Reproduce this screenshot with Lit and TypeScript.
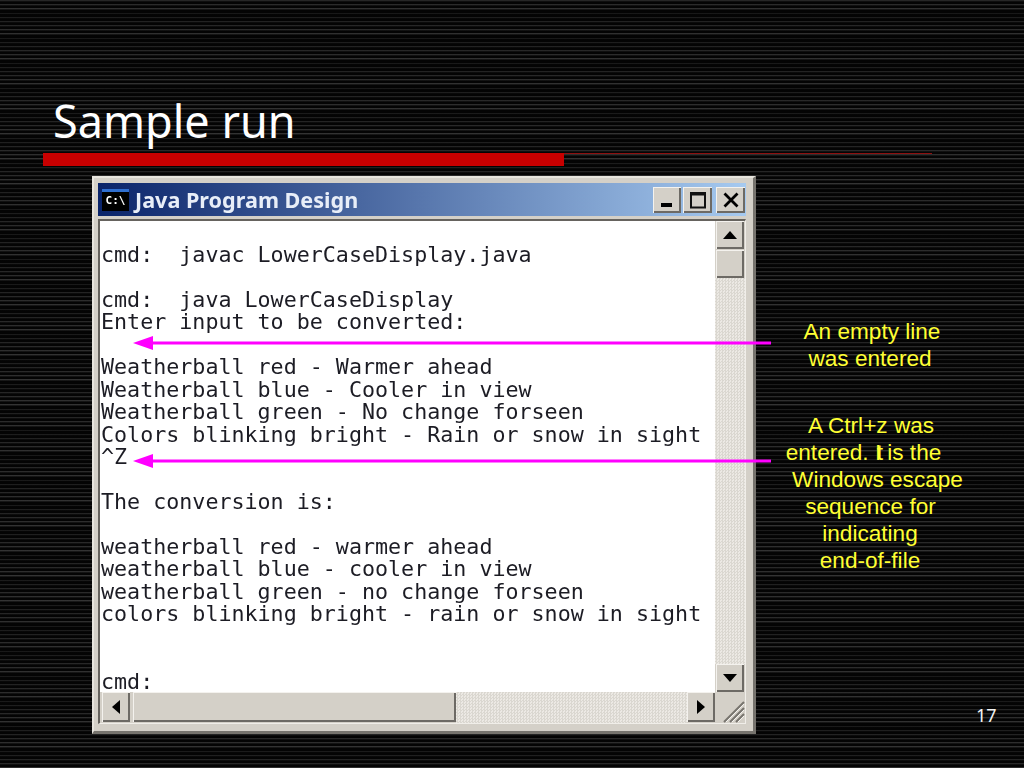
import { LitElement, html, css, svg } from "lit";
import { customElement } from "lit/decorators.js";

const CONSOLE = `cmd:  javac LowerCaseDisplay.java

cmd:  java LowerCaseDisplay
Enter input to be converted:

Weatherball red - Warmer ahead
Weatherball blue - Cooler in view
Weatherball green - No change forseen
Colors blinking bright - Rain or snow in sight
^Z

The conversion is:

weatherball red - warmer ahead
weatherball blue - cooler in view
weatherball green - no change forseen
colors blinking bright - rain or snow in sight


cmd:`;

const arrow = (y: number) => svg`
  <polygon points="133,${y} 153,${y - 7} 153,${y + 7}" fill="#ff00ff" />
  <rect x="150" y="${y - 1.5}" width="621" height="3" fill="#ff00ff" />`;

@customElement("app-root")
export class AppRoot extends LitElement {
  static styles = css`
    :host {
      display: block;
      position: relative;
      width: 1024px;
      height: 768px;
      overflow: hidden;
      background-color: #040404;
      background-image: repeating-linear-gradient(
        to bottom,
        #343434 0px,
        #181818 1px,
        #040404 2px,
        #040404 4.17px
      );
      font-family: "Liberation Sans", Arial, sans-serif;
    }
    .title {
      margin: 0;
      padding: 89px 0 0 53px;
      box-sizing: border-box;
      font: 400 45px/64px "Noto Sans", sans-serif;
      color: #fff;
      height: 153px;
    }
    .rule {
      display: flex;
      align-items: flex-start;
      margin-left: 43px;
    }
    .rule-bar {
      width: 521px;
      height: 13px;
      background: #c80000;
    }
    .rule-line {
      width: 368px;
      height: 1px;
      background: #8c1010;
    }
    .content {
      display: flex;
      margin: 10px 0 0 92px;
    }
    .window {
      flex: none;
      box-sizing: border-box;
      width: 664px;
      height: 558px;
      padding: 6px 7px 7px 4px;
      background: #d4d0c8;
      border-top: 2px solid #e8e5de;
      border-left: 2px solid #e8e5de;
      border-right: 3px solid #77746e;
      border-bottom: 3px solid #77746e;
      display: flex;
      flex-direction: column;
      filter: blur(0.45px);
    }
    .titlebar {
      flex: none;
      height: 33px;
      margin: -1px 0 0 0;
      background: linear-gradient(to right, #0a246a, #a6caf0);
      display: flex;
      align-items: center;
      padding: 0 1px 0 4px;
    }
    .appicon {
      flex: none;
      width: 27px;
      height: 22px;
      box-sizing: border-box;
      background: #000;
      border-top: 3px solid #2f6fd0;
      color: #fff;
      font: 700 11px/18px "DejaVu Sans Mono", monospace;
      text-align: center;
    }
    .apptitle {
      flex: 1;
      margin-left: 6px;
      font: 700 21.6px/30px "Noto Sans", sans-serif;
      color: #e8eef8;
      white-space: nowrap;
    }
    .capbtn {
      flex: none;
      width: 28px;
      height: 26px;
      box-sizing: border-box;
      background: #d4d0c8;
      box-shadow: inset 1px 1px 0 #f4f2ee, inset -2px -2px 0 #6d6a65;
      display: flex;
      align-items: center;
      justify-content: center;
    }
    .capbtn.max {
      width: 29px;
      margin-left: 2px;
    }
    .capbtn.close {
      width: 29px;
      margin-left: 4px;
    }
    .client {
      flex: 1;
      min-height: 0;
      margin-top: 3px;
      border-top: 2px solid #66635e;
      border-left: 2px solid #66635e;
      border-right: 1px solid #f0eee9;
      border-bottom: 1px solid #f0eee9;
      display: grid;
      grid-template-columns: minmax(0, 1fr) 30px;
      grid-template-rows: minmax(0, 1fr) 31px;
    }
    .term {
      margin: 0;
      min-height: 0;
      padding: 23px 0 0 1px;
      background: #fff;
      color: #1c1c24;
      font: 400 21.68px/22.45px "DejaVu Sans Mono", monospace;
      white-space: pre;
    }
    .vbar {
      display: flex;
      flex-direction: column;
      min-height: 0;
    }
    .hbar {
      display: flex;
      padding-left: 2px;
      background: #d4d0c8;
    }
    .sbtn {
      flex: none;
      width: 28px;
      height: 28px;
      box-sizing: border-box;
      background: #d4d0c8;
      box-shadow: inset 1px 1px 0 #f4f2ee, inset -2px -2px 0 #6d6a65;
      display: flex;
      align-items: center;
      justify-content: center;
    }
    .track {
      flex: 1;
      background-color: #ece9e4;
      background-image: repeating-conic-gradient(
        #dad7d0 0% 25%,
        #ece9e4 0% 50%
      );
      background-size: 3px 3px;
    }
    .vthumb {
      flex: none;
      height: 28px;
      margin-top: 1px;
    }
    .hthumb {
      flex: none;
      width: 323px;
      height: 30px;
      margin-left: 3px;
    }
    .vbar .sbtn {
      margin-left: 1px;
    }
    .hbar .sbtn {
      height: 30px;
    }
    .corner {
      background: #d4d0c8;
      display: flex;
      align-items: flex-end;
      justify-content: flex-end;
    }
    .notes {
      position: relative;
      flex: 1;
      color: #ffff33;
      font-size: 22.6px;
      line-height: 27px;
      text-align: center;
      white-space: nowrap;
    }
    .note {
      width: 228px;
      display: flex;
      flex-direction: column;
      align-items: center;
    }
    .note.first {
      margin-top: 142px;
    }
    .note.second {
      margin-top: 40px;
    }
    .l1 {
      margin-left: 4px;
    }
    .l2 {
      margin-left: 2px;
    }
    .lm {
      margin-right: 13px;
    }
    .lp {
      margin-left: 15px;
    }
    .lo {
      margin-left: 1px;
    }
    .tight {
      letter-spacing: -4.5px;
      margin-right: 2.5px;
    }
    .pagenum {
      position: absolute;
      left: 976px;
      top: 705px;
      color: #f4f4f4;
      font: 400 18px/20px "Noto Sans", sans-serif;
    }
    .arrows {
      position: absolute;
      left: 0;
      top: 0;
      pointer-events: none;
    }
  `;

  render() {
    return html`
      <h1 class="title">Sample run</h1>
      <div class="rule">
        <div class="rule-bar"></div>
        <div class="rule-line"></div>
      </div>
      <div class="content">
        <div class="window">
          <div class="titlebar">
            <div class="appicon">C:\\</div>
            <div class="apptitle">Java Program Design</div>
            <div class="capbtn">
              <svg width="14" height="14" viewBox="0 0 14 14"><rect x="1" y="10" width="11" height="4" fill="#000" /></svg>
            </div>
            <div class="capbtn max">
              <svg width="18" height="18" viewBox="0 0 18 18"><path d="M2 3.5h14v13H2z" fill="none" stroke="#111" stroke-width="2" /><rect x="1" y="1" width="16" height="3" fill="#111" /></svg>
            </div>
            <div class="capbtn close">
              <svg width="16" height="16" viewBox="0 0 16 16"><path d="M1.5 1.5l13 13M14.5 1.5l-13 13" stroke="#000" stroke-width="2.8" /></svg>
            </div>
          </div>
          <div class="client">
            <pre class="term">${CONSOLE}</pre>
            <div class="vbar">
              <div class="sbtn">
                <svg width="14" height="8" viewBox="0 0 14 8"><polygon points="7,0 14,8 0,8" fill="#000" /></svg>
              </div>
              <div class="sbtn vthumb"></div>
              <div class="track"></div>
              <div class="sbtn">
                <svg width="14" height="8" viewBox="0 0 14 8"><polygon points="0,0 14,0 7,8" fill="#000" /></svg>
              </div>
            </div>
            <div class="hbar">
              <div class="sbtn">
                <svg width="8" height="14" viewBox="0 0 8 14"><polygon points="8,0 8,14 0,7" fill="#000" /></svg>
              </div>
              <div class="sbtn hthumb"></div>
              <div class="track"></div>
              <div class="sbtn">
                <svg width="8" height="14" viewBox="0 0 8 14"><polygon points="0,0 8,7 0,14" fill="#000" /></svg>
              </div>
            </div>
            <div class="corner">
              <svg width="24" height="24" viewBox="0 0 24 24">
                <path d="M23 3L3 23M23 9L9 23M23 15L15 23" stroke="#77746e" stroke-width="2" fill="none" />
                <path d="M23 5L5 23M23 11L11 23M23 17L17 23" stroke="#f4f2ee" stroke-width="1" fill="none" />
              </svg>
            </div>
          </div>
        </div>
        <div class="notes">
          <div class="note first">
            <div class="l1">An empty line</div>
            <div>was entered</div>
          </div>
          <div class="note second">
            <div class="l2">A Ctrl+z was</div>
            <div class="lm">entered. <span class="tight">It</span> is the</div>
            <div class="lp">Windows escape</div>
            <div class="lo">sequence for</div>
            <div>indicating</div>
            <div>end-of-file</div>
          </div>
        </div>
      </div>
      <div class="pagenum">17</div>
      <svg class="arrows" width="1024" height="768" viewBox="0 0 1024 768">
        ${arrow(343)}${arrow(461)}
      </svg>
    `;
  }
}
